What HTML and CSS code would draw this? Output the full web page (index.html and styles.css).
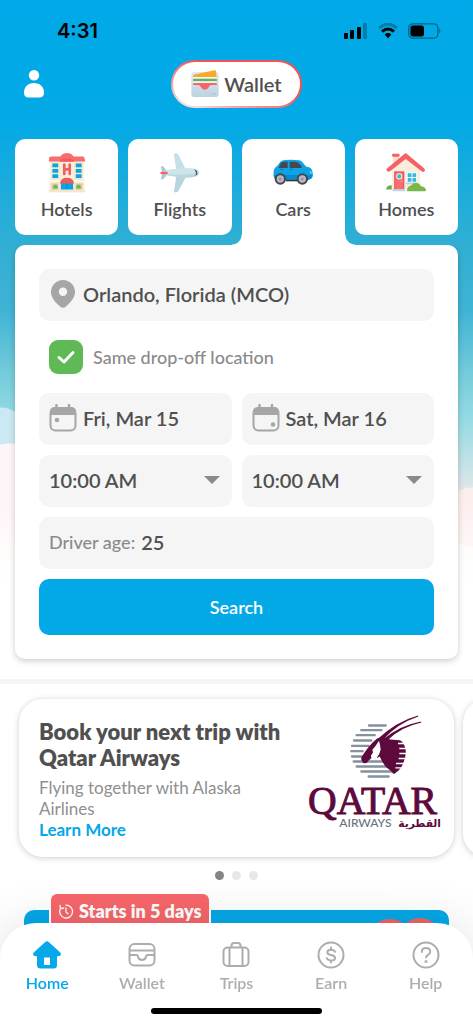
FILE: index.html
```html
<!DOCTYPE html>
<html lang="en">
<head>
<meta charset="utf-8">
<meta name="viewport" content="width=device-width, initial-scale=1">
<title>Cars</title>
<link rel="stylesheet" href="styles.css">
</head>
<body>
<main class="screen">
  <section class="hero">
    <div class="status">
      <span class="clock">4:31</span>
      <span class="status-icons">
        <svg width="24" height="16" viewBox="0 0 24 16"><rect x="0" y="10" width="4" height="6" rx="1"/><rect x="6" y="7" width="4" height="9" rx="1"/><rect x="13" y="4" width="4" height="12" rx="1"/><rect x="19" y="0" width="4" height="16" rx="1" opacity=".25"/></svg>
        <svg width="20" height="16" viewBox="0 0 20 16" fill="none" stroke="#000" stroke-width="3"><path d="M1 5.2Q10-2.8 19 5.2" opacity=".25"/><path d="M4 8.7Q10 3.4 16 8.7"/><path d="M6.6 11.4Q10 8.6 13.4 11.4L10 15.2Z" fill="#000" stroke="none"/></svg>
        <svg width="33" height="16" viewBox="0 0 33 16"><rect x=".8" y=".8" width="29" height="14.4" rx="4" fill="none" stroke="#000" stroke-opacity=".4" stroke-width="1.3"/><rect x="2.5" y="2.5" width="13.5" height="11" rx="2.5"/><path d="M31.3 5.5q2 2.5 0 5z" opacity=".5"/></svg>
      </span>
    </div>
    <header class="topbar">
      <button class="profile" aria-label="Profile">
        <svg width="20" height="28" viewBox="0 0 20 28" fill="#fff"><circle cx="10" cy="5.2" r="5.2"/><path d="M0 22.500C0 17 4 13 10 13s10 4 10 9.500Q20 27.500 15.500 27.500H4.500Q0 27.500 0 22.500Z"/></svg>
      </button>
      <button class="wallet">
        <svg width="28" height="28" viewBox="0 0 84 84"><defs><linearGradient id="wg" x2="0" y2="1"><stop stop-color="#dce8f1"/><stop offset="1" stop-color="#bdd3e2"/></linearGradient></defs><rect x="1" y="6" width="82" height="75" rx="10" fill="url(#wg)"/><path d="M8 14 70 1q5-1 5 4l2 16H6Z" fill="#fba826"/><path d="M6 21h71v5H6z" fill="#f4f8fb"/><rect x="6" y="26" width="72" height="8" rx="3" fill="#5fb85f"/><path d="M6 34h71v5H6z" fill="#eef4f8"/><path d="M9 39h66q3 0 3 6H61q-6 0-9 8-3 6-11 6t-11-7q-3-7-9-7H6q0-6 3-6Z" fill="#fb6464"/><path d="M62 72h12" stroke="#a9c0d2" stroke-width="3"/></svg>
        <span>Wallet</span>
      </button>
    </header>
    <nav class="tabs" aria-label="Travel type">
      <button class="tab">
        <svg class="art" viewBox="0 0 108 118"><path d="M5 24h98v58h2v34H3V82h2z" fill="#f4e8cf"/><path d="M34 16h40v90H34z" fill="#f8efdc"/><path d="M2 12q2-2 6-2h26Q42 0 54 0t20 10h26q4 0 5 3l3 12H0Z" fill="#f96c6c"/><path d="M34 20q20-8 40 0v6H34z" fill="#ef5b60"/><path d="M11 31h17v11H11zm69 0h17v11H80zM11 47h17v11H11zm69 0h17v11H80zM11 63h17v11H11zm69 0h17v11H80z" fill="#06a5e4"/><path d="M46 34v28M62 34v28M46 48h16" stroke="#f45d62" stroke-width="8" stroke-linecap="round"/><path d="M0 80h108v6H0z" fill="#fff8e9"/><path d="M36 88h36v22H36z" fill="#06a5e4"/><path d="M54 88v22" stroke="#087fc4" stroke-width="2"/><path d="M33 90q2-17 21-17t21 17z" fill="#f2585e"/><path d="M9 90h19v19H9zm71 0h19v19H80z" fill="#d8ca9e"/><path d="M13 105q0-11 7-11t7 11zm68 0q0-11 7-11t7 11z" fill="#69b84e"/><rect y="108" width="108" height="8" rx="3" fill="#f3e6cc"/></svg>
        <span>Hotels</span>
      </button>
      <button class="tab">
        <svg class="art" viewBox="0 0 116 118"><path d="M40 3q6-5 13 1l20 40v12H48Z" fill="#c4dfe7"/><path d="M40 114q6 5 13-1l20-38V62H48Z" fill="#b6d5df"/><path d="m1 39 8 1 15 19L9 77l-8 1 5-19Z" fill="#a9cbd6"/><path d="M4 58q8-7 30-10 42-6 65-2 16 4 16 12t-16 13q-25 5-65-3Q10 65 4 58Z" fill="#cce4ea"/><path d="M5 61q50 7 109-1-1 7-15 11-30 5-65-3-21-3-29-7Z" fill="#b9d9e2"/><rect x="0" y="55" width="22" height="8" rx="4" fill="#f56267"/><path d="M99 48q8 2 11 9l-5 3q2-6-6-12Zm6 12q2 4-5 8 7 0 10-9Z" fill="#40434a"/></svg>
        <span>Flights</span>
      </button>
      <button class="tab active" aria-current="page">
        <svg class="art" viewBox="0 0 120 118"><path d="M2 63Q0 45 12 39L21 27q4-6 14-7 24-2 44 1 7 1 16 14l6 5q16 2 17 14l2 12q-1 11-14 13H12Q1 78 2 63Z" fill="#0ba4e4"/><path d="m18 41 5-11q2-5 10-5h11v19H19Q16 44 18 41Zm32-16h17q9 0 15 9l5 7q0 3-5 3H50Z" fill="#45484e"/><path d="M22 48h7m22 0h7" stroke="#086da4" stroke-width="3"/><path d="M2 65h115v7q-2 6-10 7H11q-8-2-9-14" fill="#0789cc"/><path d="M39 79h35v5H39z" fill="#35393f"/><circle cx="22" cy="77" r="17" fill="#43454b"/><circle cx="22" cy="77" r="11" fill="#b9b7c4"/><circle cx="88" cy="77" r="17" fill="#43454b"/><circle cx="88" cy="77" r="11" fill="#b9b7c4"/><circle cx="22" cy="77" r="4" fill="#918f9f"/><circle cx="88" cy="77" r="4" fill="#918f9f"/><path d="M110 52q6 2 7 9-7-1-7-9Z" fill="#9de0fa"/></svg>
        <span>Cars</span>
      </button>
      <button class="tab">
        <svg class="art" viewBox="0 0 118 118"><path d="M20 6h18v34H20z" fill="#f5e5c8"/><rect x="18" y="2" width="22" height="9" rx="3" fill="#f45f64"/><path d="M17 48 58 9l43 39v62H17Z" fill="#f8eedb"/><path d="M0 108q2-14 17-13v13Z" fill="#69ae45"/><path d="M3 46 54 3q4-4 8 0l51 43q3 4 1 7-4 5-9 1L58 18 12 54q-6 3-9-1-3-4 0-7Z" fill="#f66167"/><path d="M24 54h30v54H24z" fill="#ef555e"/><path d="M28 58h22v48H28z" fill="#f76d70"/><circle cx="39" cy="69" r="9" fill="#fff0d7"/><circle cx="39" cy="69" r="6" fill="#31bce2"/><circle cx="46" cy="83" r="2" fill="#ffcf42"/><path d="M61 57h31v32H61z" fill="#fff"/><path d="M64 60h11v11H64zm14 0h11v11H78zM64 74h11v11H64zm14 0h11v11H78z" fill="#31b9df"/><path d="M58 87h34v5H58zM20 106h36v7H20z" fill="#bcd3e4"/><path d="M62 112q0-14 12-16 5-8 15-8 10 1 14 9 14 3 15 13 0 3-4 3H66q-4 0-4-1Z" fill="#78b74a"/></svg>
        <span>Homes</span>
      </button>
    </nav>
    <form class="panel" onsubmit="return false">
      <label class="field">
        <svg class="pin" width="24" height="28" viewBox="0 0 24 28"><path fill="#a6a6a6" fill-rule="evenodd" d="M12 0a12 12 0 0 1 12 12c0 6-5 11-9 14.500q-3 2.500-6 0C5 23 0 18 0 12A12 12 0 0 1 12 0Zm0 7.500a4.200 4.200 0 1 0 0 8.400 4.200 4.200 0 0 0 0-8.400Z"/></svg>
        <input class="value" type="text" value="Orlando, Florida (MCO)" aria-label="Pick-up location">
      </label>
      <label class="check"><input type="checkbox" checked><span>Same drop-off location</span></label>
      <div class="pair">
        <button type="button" class="field value">
          <svg width="28" height="28" viewBox="0 0 28 28"><path d="M7.500 1v5M20 1v5" stroke="#a6a6a6" stroke-width="2.500" stroke-linecap="round"/><rect x="1.500" y="4" width="25" height="22.500" rx="5" fill="none" stroke="#a6a6a6" stroke-width="2"/><path d="M1 11V8q0-5 5-5h16q5 0 5 5v3Z" fill="#a6a6a6"/><circle cx="8" cy="16" r="2.300" fill="#a6a6a6"/></svg>
          <span>Fri, Mar 15</span>
        </button>
        <button type="button" class="field value">
          <svg width="28" height="28" viewBox="0 0 28 28"><path d="M7.500 1v5M20 1v5" stroke="#a6a6a6" stroke-width="2.500" stroke-linecap="round"/><rect x="1.500" y="4" width="25" height="22.500" rx="5" fill="none" stroke="#a6a6a6" stroke-width="2"/><path d="M1 11V8q0-5 5-5h16q5 0 5 5v3Z" fill="#a6a6a6"/><circle cx="21" cy="20.500" r="2.300" fill="#a6a6a6"/></svg>
          <span>Sat, Mar 16</span>
        </button>
      </div>
      <div class="pair">
        <label class="field"><select class="value time" aria-label="Pick-up time"><option>10:00 AM</option></select><svg class="caret" width="16" height="8" viewBox="0 0 16 8"><path d="M0 0h16L8 8z" fill="#8a8a8a"/></svg></label>
        <label class="field"><select class="value time" aria-label="Drop-off time"><option>10:00 AM</option></select><svg class="caret" width="16" height="8" viewBox="0 0 16 8"><path d="M0 0h16L8 8z" fill="#8a8a8a"/></svg></label>
      </div>
      <label class="field age"><span>Driver age:</span><input class="value" type="text" inputmode="numeric" value="25"></label>
      <button class="search">Search</button>
    </form>
  </section>

  <section class="offers">
    <div class="carousel">
      <article class="card">
        <div class="copy">
          <h2>Book your next trip with Qatar Airways</h2>
          <p>Flying together with Alaska Airlines</p>
          <a href="#offer">Learn More</a>
        </div>
        <svg class="logo" viewBox="0 0 402 350" role="img" aria-label="Qatar Airways">
          <g stroke="#84919d" stroke-width="7" stroke-linecap="round"><path d="M183 34h50M160 48h60M146 63h54M138 79h52M132 95h50M130 111h34M132 127h30M137 142h100M146 157h92M160 172h90M182 187h60"/></g>
          <path d="M207 73Q180 96 160 130q-2 11 7 17 10 2 15-8l10-8q15 4 23-4 10 22 20 32 14 10 20 19 5 2 9-3 16-10 22-29 9-18 7-40-5-22-17-28l-30-2Q230 66 207 73Z" fill="#5c0a3c"/>
          <path d="M304 88h-34M304 103h-30M304 118h-30M304 133h-32M300 148h-36M294 161h-32" stroke="#fff" stroke-width="4"/>
          <path d="m213 80 3 12 2 14q-2 13-13 27l-15 1-1-10 6-9-2-8 9-11Z" fill="#fff"/>
          <path d="M207 76Q265 22 330 4q3 2-1 4-59 20-101 66ZM228 74Q275 34 339 22q3 2-1 4-56 12-97 50Z" fill="#5c0a3c"/>
          <text x="0" y="299" font-family="Liberation Serif, serif" font-size="119" fill="#5c0a3c" stroke="#5c0a3c" stroke-width="3">QATAR</text>
          <text x="94" y="340" font-family="Lato, sans-serif" font-size="36" font-weight="500" fill="#647481">AIRWAYS</text>
          <text x="399" y="338" direction="rtl" font-family="DejaVu Sans, sans-serif" font-weight="700" font-size="32" fill="#5c0a3c">القطرية</text>
        </svg>
      </article>
      <article class="card" aria-hidden="true"></article>
    </div>
    <div class="dots"><i class="on"></i><i></i><i></i></div>
    <article class="promo">
      <span class="badge"><svg width="15" height="15" viewBox="0 0 15 15" fill="none" stroke="#fff" stroke-width="1.300" stroke-linecap="round"><path d="M7 1.200a6.400 6.400 0 1 1-5.800 4M1 1.500l.5 3.200L4.700 4M7 4v4l2 1.800"/></svg>Starts in 5 days</span>
      <svg class="heart" width="62" height="40" viewBox="0 0 62 40" fill="#ee6467"><ellipse cx="17" cy="18" rx="20" ry="17"/><circle cx="47" cy="21" r="21"/></svg>
    </article>
  </section>
</main>

<footer class="bottom">
  <nav class="menu" aria-label="Main">
    <a class="current" href="#home"><svg width="28" height="28" viewBox="0 0 28 28"><path fill="#05a8e8" fill-rule="evenodd" d="M12 1.200q2-1.800 4 0l11 10q1.500 2 .4 3.300Q26 15.500 24 15.300V24q0 3.500-3.500 3.500h-13Q4 27.500 4 24v-8.700q-2 .2-3.400-.8Q-.5 13 1 11.200ZM11 16.500V24h6v-7.500Z"/></svg><span>Home</span></a>
    <a href="#wallet"><svg width="28" height="28" viewBox="0 0 28 28" fill="none" stroke="#adadad" stroke-width="2"><rect x="1.500" y="3" width="25" height="21.500" rx="5"/><path d="M2 9.500h24M2 14h6.500q1.300 0 1.500 1.500.7 3.500 4 3.500t4-3.500q.2-1.500 1.500-1.500H26"/></svg><span>Wallet</span></a>
    <a href="#trips"><svg width="28" height="28" viewBox="0 0 28 28" fill="none" stroke="#adadad" stroke-width="2"><rect x="1.500" y="6.500" width="25" height="18.500" rx="4"/><path d="M7.500 6.500V25m13-18.500V25M9.500 6.500V4.500Q9.500 2 12 2h4q2.500 0 2.500 2.500v2"/></svg><span>Trips</span></a>
    <a href="#earn"><svg width="28" height="28" viewBox="0 0 28 28" fill="none" stroke="#adadad" stroke-width="2" stroke-linecap="round"><circle cx="14" cy="14" r="12.500"/><path d="M18 10.800q-.8-2-4-2-3.700 0-3.700 2.500 0 2.200 3.700 2.700 4 .5 4 2.900 0 2.500-4 2.500-3.300 0-4.200-2.200M14 6.500v2m0 11v2"/></svg><span>Earn</span></a>
    <a href="#help"><svg width="28" height="28" viewBox="0 0 28 28" fill="none" stroke="#adadad" stroke-width="2" stroke-linecap="round"><circle cx="14" cy="14" r="12.500"/><path d="M9.800 11q0-4 4.200-4t4.200 3.700q0 2-2.200 3.300-2 1-2 2.500"/><circle cx="14" cy="20.500" r=".6"/></svg><span>Help</span></a>
  </nav>
  <div class="indicator"></div>
</footer>
</body>
</html>
```

FILE: styles.css
```css
* { box-sizing: border-box; }
body { margin: 0; font-family: Lato, sans-serif; color: #505050; background: #fff; }
button, input, select { font: inherit; color: inherit; border: 0; margin: 0; padding: 0; background: none; }
button { cursor: pointer; }
svg { display: block; flex: none; }

.screen { height: 100vh; overflow: hidden auto; scrollbar-width: none; }

.hero {
  padding: 0 15px 20px;
  background:
    linear-gradient(transparent 500px, #fff 600px),
    radial-gradient(circle 46px at 10px 489px, #fff4f8 98%, transparent),
    radial-gradient(ellipse 34px 60px at 2px 467px, #cbe9f2 98%, transparent),
    radial-gradient(circle 30px at 100% 517px, #fdeeee 97%, transparent),
    linear-gradient(#00a9e7 0, #02a9e6 120px, #31afd3 245px, #3fb3d4 310px, #76ccdb 375px, #91dae4 415px, #b5e0e6 450px, #dce6e9 486px, #fcf0ef 500px, #fff8f7 545px, #fff 590px);
  border-bottom: 5px solid #f5f5f5;
}
.status { display: flex; justify-content: space-between; align-items: center; height: 60px; padding: 2px 17px 0 42px; color: #000; }
.clock { font: 600 20px/24px Inter, sans-serif; }
.status-icons { display: flex; align-items: center; gap: 10px; }

.topbar { display: grid; grid-template-columns: 1fr auto 1fr; align-items: center; height: 48px; }
.profile { justify-self: start; padding: 0 9px; }
.wallet {
  display: flex; align-items: center; gap: 5px; height: 48px; padding: 0 18px;
  border: 2px solid transparent; border-radius: 24px; font-size: 20px; font-weight: 600;
  background: linear-gradient(#fff, #fff) padding-box, linear-gradient(20deg, #fff 0, #f7a3a7 25%, #f05459 60%, #f05459) border-box;
}

.tabs { display: grid; grid-template-columns: repeat(4, 1fr); column-gap: 10px; margin-top: 31px; }
.tab {
  display: flex; flex-direction: column; align-items: center; gap: 4px; height: 96px; margin-bottom: 10px; padding-top: 14px;
  background: #fff; border-radius: 10px; font-size: 18px; line-height: 24px; font-weight: 600;
}
.art { width: 40px; height: 40px; }
.tab.active { position: relative; height: 106px; margin-bottom: 0; border-radius: 10px 10px 0 0; }
.tab.active::before, .tab.active::after { content: ""; position: absolute; bottom: 0; width: 10px; height: 10px; }
.tab.active::before { right: 100%; background: radial-gradient(circle at 0 0, transparent 9px, #fff 10px); }
.tab.active::after { left: 100%; background: radial-gradient(circle at 100% 0, transparent 9px, #fff 10px); }

.panel { display: grid; gap: 10px; padding: 24px; background: #fff; border-radius: 10px; box-shadow: 0 2px 6px rgba(0, 0, 0, .2); clip-path: inset(0 -12px -12px); }
.pair { display: grid; grid-template-columns: 1fr 1fr; gap: 10px; }
.field { display: flex; align-items: center; gap: 6px; height: 52px; padding: 0 10px 2px; background: #f5f5f5; border-radius: 10px; min-width: 0; }
.pin { margin: 0 2px; }
.caret { margin-right: 2px; }
.value { font-size: 20px; font-weight: 600; }
input.value { flex: 1; min-width: 0; outline: 0; }
.time { flex: 1; min-width: 0; appearance: none; outline: 0; }
.age { color: #8a8a8a; font-size: 18px; font-weight: 500; }
.age .value { color: #505050; }
.check { display: flex; align-items: center; gap: 10px; height: 52px; padding-left: 10px; font-size: 18px; font-weight: 500; color: #8a8a8a; }
.check input {
  appearance: none; width: 34px; height: 34px; border-radius: 9px;
  background: #5fba55 url("data:image/svg+xml,%3Csvg xmlns='http://www.w3.org/2000/svg' viewBox='0 0 34 34'%3E%3Cpath d='M10 17.500l5 4.500 9-9.500' fill='none' stroke='white' stroke-width='3' stroke-linecap='round' stroke-linejoin='round'/%3E%3C/svg%3E") center / 34px;
}
.search { height: 56px; border-radius: 10px; background: #03a9e7; color: #fff; font-size: 18px; font-weight: 600; }

.offers { padding-bottom: 120px; }
.carousel { display: flex; gap: 9px; padding: 15px 19px 14px; overflow: hidden; }
.card { display: flex; flex: 0 0 100%; justify-content: space-between; min-height: 158px; padding: 20px 12px 16px 20px; border-radius: 24px; background: #fff; box-shadow: 0 1px 6px rgba(0, 0, 0, .2); }
.copy { flex: 0 1 250px; line-height: 21px; }
.card h2 { margin: 0 0 6px; font-size: 22px; line-height: 26px; font-weight: 800; }
.card p { margin: 0; max-width: 220px; font-size: 17px; color: #8f8f8f; }
.card a { font-size: 17px; font-weight: 700; color: #05a8e8; text-decoration: none; }
.logo { width: 134px; height: 117px; margin-top: -5px; }
.dots { display: flex; justify-content: center; gap: 8px; }
.dots i { width: 9px; height: 9px; border-radius: 50%; background: #e8e8e8; }
.dots .on { background: #858585; }
.promo { position: relative; height: 120px; margin: 30px 24px 0; border-radius: 10px; background: #05a8e8; }
.badge { position: absolute; left: 25px; top: -18px; display: flex; align-items: center; gap: 5px; height: 38px; padding: 0 8px; border: 2px solid #fff; border-radius: 8px; background: #f7666a; color: #fff; font-size: 18px; font-weight: 800; white-space: nowrap; }
.heart { position: absolute; right: 14px; top: 8px; }

.bottom { position: fixed; inset: auto 0 0; padding-bottom: 10px; border-radius: 36px 36px 0 0; background: #fff; box-shadow: 0 0 50px rgba(0, 0, 0, .12); }
.menu { display: grid; grid-template-columns: repeat(5, 1fr); padding-top: 18px; }
.menu a { display: flex; flex-direction: column; align-items: center; gap: 4px; color: #adadad; text-decoration: none; font-size: 16px; line-height: 20px; font-weight: 600; }
.menu .current { color: #05a8e8; }
.indicator { width: 36%; height: 6px; margin: 15px auto 0; border-radius: 3px; background: #000; }
```
